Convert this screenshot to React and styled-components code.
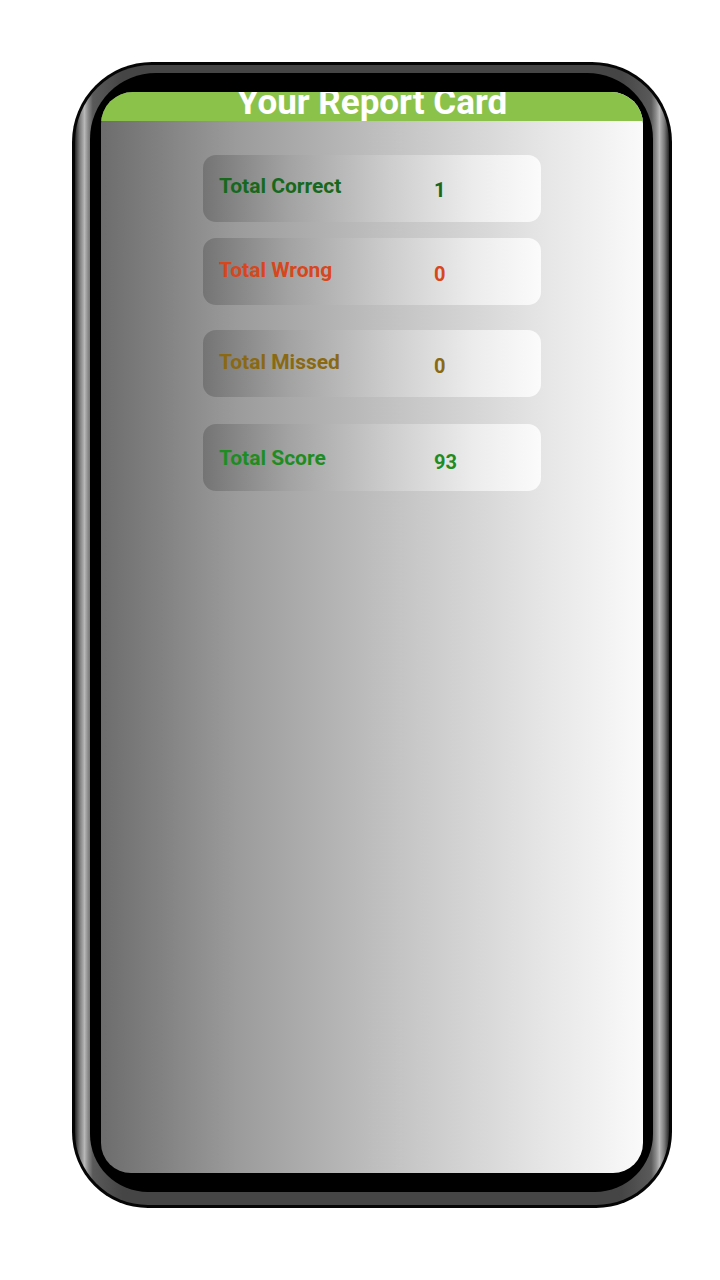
import React from 'react';
import styled, { createGlobalStyle } from 'styled-components';

const GlobalStyle = createGlobalStyle`
    body {
        margin: 0;
        background: #ffffff;
        font-family: Roboto, "Liberation Sans", Arial, sans-serif;
    }
`;

const Page = styled.div`
    width: 720px;
    height: 1280px;
    padding: 62px 0 0 72px;
    box-sizing: border-box;
`;

const Frame = styled.div`
    width: 600px;
    height: 1146px;
    box-sizing: border-box;
    padding: 3px;
    background: #050505;
    border-radius: 80px 80px 76px 76px;
`;

const Bezel = styled.div`
    height: 100%;
    box-sizing: border-box;
    padding: 8px 16px 13px 15px;
    border-radius: 77px 77px 73px 73px;
    background:
        linear-gradient(90deg, #262626 0%, #7c7c7c 0.8%, #b8b8b8 1.6%, #8a8a8a 2.2%, #5a5a5a 3%, #454545 8%, #454545 92%, #5a5a5a 97%, #8a8a8a 97.8%, #b8b8b8 98.4%, #7c7c7c 99.2%, #262626 100%);
`;

const InnerBlack = styled.div`
    height: 100%;
    box-sizing: border-box;
    padding: 19px 10px 19px 11px;
    background: #000000;
    border-radius: 66px 66px 58px 58px;
`;

const Screen = styled.div`
    height: 100%;
    overflow: hidden;
    border-radius: 32px 32px 30px 30px;
    background: linear-gradient(90deg, #6d6d6d 0%, #9b9b9b 25%, #c4c4c4 55%, #e6e6e6 82%, #fafafa 100%);
    display: flex;
    flex-direction: column;
    align-items: center;
`;

const Header = styled.div`
    align-self: stretch;
    height: 29px;
    background: #8bc34a;
    overflow: hidden;
    display: flex;
    justify-content: center;
`;

const Title = styled.h1`
    margin: -7px 0 0 0;
    font-size: 35px;
    line-height: 35px;
    font-weight: 700;
    color: #ffffff;
    white-space: nowrap;
`;

const CardList = styled.div`
    display: flex;
    flex-direction: column;
    padding-top: 34px;
`;

const Card = styled.div`
    width: 338px;
    height: 67px;
    box-sizing: border-box;
    margin-top: ${props => props.$space}px;
    padding: ${props => props.$pad}px 0 0 16px;
    border-radius: 13px;
    background: linear-gradient(90deg, #747474 0%, #a2a2a2 25%, #cdcdcd 55%, #ececec 80%, #fbfbfb 100%);
    display: grid;
    grid-template-columns: 215px auto;
    align-items: start;
`;

const Label = styled.div`
    font-size: 21px;
    line-height: 24px;
    font-weight: 700;
    color: ${props => props.$color};
`;

const Value = styled.div`
    margin-top: 4px;
    font-size: 20px;
    line-height: 24px;
    font-weight: 700;
    color: ${props => props.$color};
`;

const rows = [
    { label: 'Total Correct', value: 1, color: '#17681c', space: 0, pad: 19 },
    { label: 'Total Wrong', value: 0, color: '#d8461c', space: 16, pad: 20 },
    { label: 'Total Missed', value: 0, color: '#8a6912', space: 25, pad: 20 },
    { label: 'Total Score', value: 93, color: '#1f8c22', space: 27, pad: 22 },
];

const App = () => {
    return (
        <Page>
            <GlobalStyle />
            <Frame>
                <Bezel>
                    <InnerBlack>
                        <Screen>
                            <Header>
                                <Title>Your Report Card</Title>
                            </Header>
                            <CardList>
                                {rows.map(row => (
                                    <Card key={row.label} $space={row.space} $pad={row.pad}>
                                        <Label $color={row.color}>{row.label}</Label>
                                        <Value $color={row.color}>{row.value}</Value>
                                    </Card>
                                ))}
                            </CardList>
                        </Screen>
                    </InnerBlack>
                </Bezel>
            </Frame>
        </Page>
    );
};

export default App;
